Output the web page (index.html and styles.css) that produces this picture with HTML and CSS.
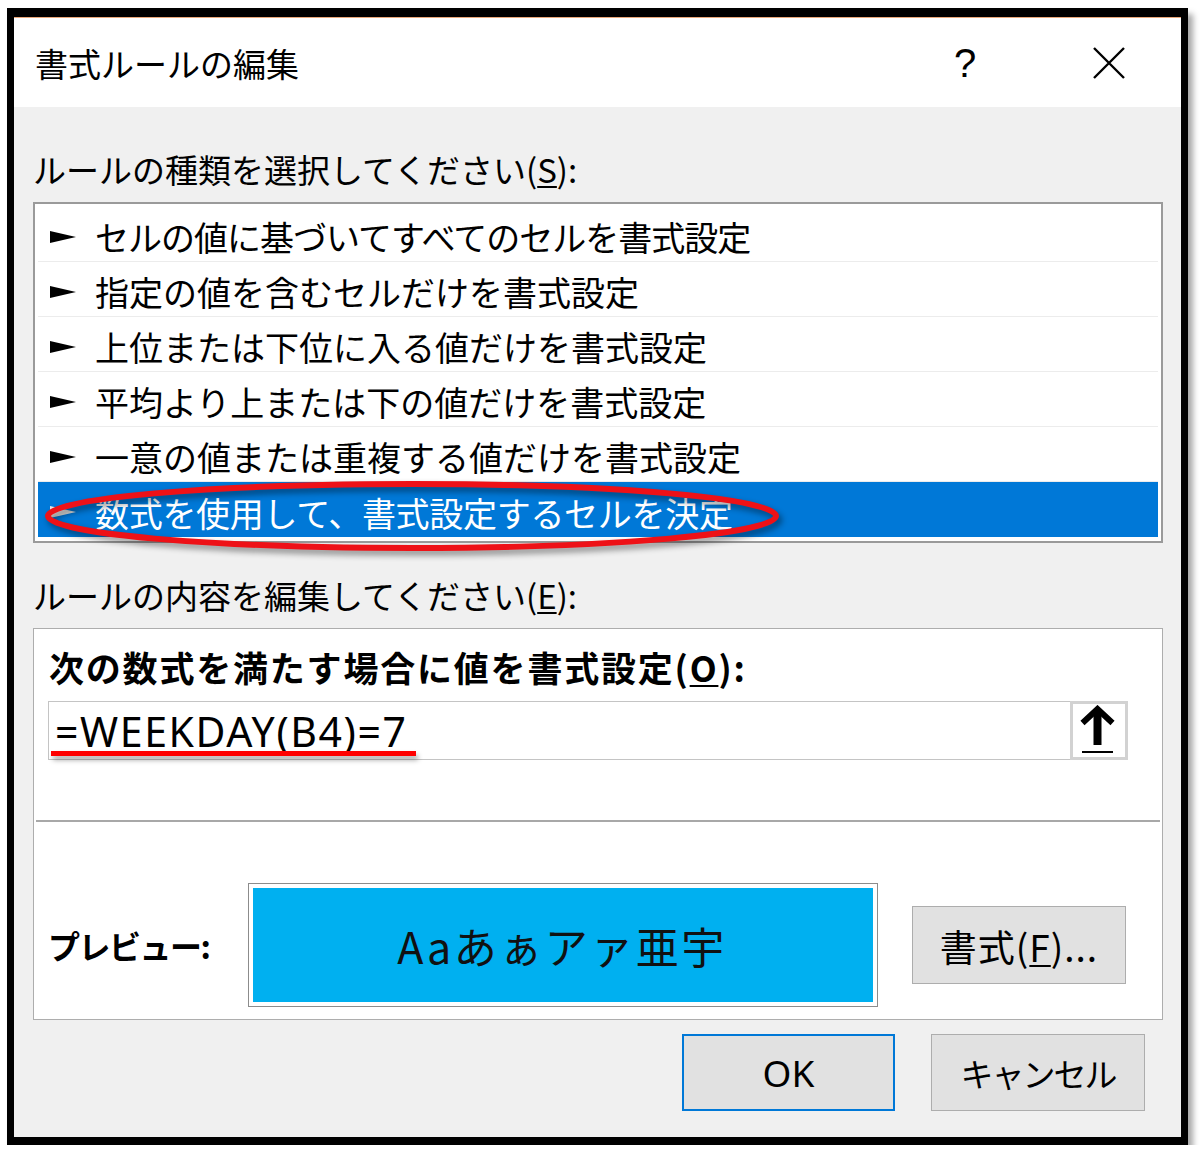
FILE: index.html
```html
<!DOCTYPE html>
<html lang="ja">
<head>
<meta charset="utf-8">
<title>書式ルールの編集</title>
<link rel="stylesheet" href="styles.css">
</head>
<body>
<div class="window">
  <div class="titlebar">
    <span class="title">書式ルールの編集</span>
    <span class="help">?</span>
    <span class="close"><svg width="34" height="32" viewBox="0 0 34 32"><path d="M2 1 L32 31 M32 1 L2 31" stroke="#000" stroke-width="2.4" fill="none"/></svg></span>
  </div>
  <div class="body">
    <div class="label l1">ルールの種類を選択してください(<u>S</u>):</div>
    <div class="list">
      <div class="row tight"><svg class="tri" width="26" height="12" viewBox="0 0 26 12"><path d="M0 0 L26 6 L0 12 Z"/></svg><span>セルの値に基づいてすべてのセルを書式設定</span></div>
      <div class="row"><svg class="tri" width="26" height="12" viewBox="0 0 26 12"><path d="M0 0 L26 6 L0 12 Z"/></svg><span>指定の値を含むセルだけを書式設定</span></div>
      <div class="row"><svg class="tri" width="26" height="12" viewBox="0 0 26 12"><path d="M0 0 L26 6 L0 12 Z"/></svg><span>上位または下位に入る値だけを書式設定</span></div>
      <div class="row"><svg class="tri" width="26" height="12" viewBox="0 0 26 12"><path d="M0 0 L26 6 L0 12 Z"/></svg><span>平均より上または下の値だけを書式設定</span></div>
      <div class="row"><svg class="tri" width="26" height="12" viewBox="0 0 26 12"><path d="M0 0 L26 6 L0 12 Z"/></svg><span>一意の値または重複する値だけを書式設定</span></div>
      <div class="row sel"><svg class="tri" width="26" height="12" viewBox="0 0 26 12"><path d="M0 0 L26 6 L0 12 Z"/></svg><span>数式を使用して、書式設定するセルを決定</span></div>
    </div>
    <div class="label l2">ルールの内容を編集してください(<u>E</u>):</div>
    <div class="panel">
      <div class="blabel">次の数式を満たす場合に値を書式設定(<u>O</u>):</div>
      <div class="input">
        <span class="formula">=WEEKDAY(B4)=7</span>
        <span class="ref"><svg width="52" height="52" viewBox="0 0 52 52"><path d="M9.5 18 L24.5 4 L39.5 18" stroke="#000" stroke-width="6" fill="none" stroke-linejoin="miter" stroke-miterlimit="4"/><rect x="20.5" y="5" width="8" height="35" fill="#000"/><rect x="9" y="46" width="31" height="2" fill="#000"/></svg></span>
      </div>
      <div class="sep"></div>
      <div class="preview-row">
        <div class="plabel">プレビュー:</div>
        <div class="pbox"><div class="pinner">Aaあぁアァ亜宇</div></div>
        <div class="btn fmt">書式(<u>F</u>)...</div>
      </div>
    </div>
    <div class="buttons">
      <div class="btn ok">OK</div>
      <div class="btn cancel">キャンセル</div>
    </div>
  </div>
  <svg class="ellipse" width="780" height="100" viewBox="0 0 780 100"><ellipse cx="378" cy="44" rx="364" ry="32" fill="none" stroke="#ee1117" stroke-width="6"/></svg>
</div>
</body>
</html>
```
FILE: styles.css
```css
* { box-sizing: border-box; }
html, body { margin: 0; padding: 0; background: #fff; }
body {
  font-family: "Noto Sans CJK JP", "Noto Sans", sans-serif;
  color: #000;
}
u { text-decoration-thickness: 2px; text-underline-offset: 3px; }

.window {
  position: relative;
  margin: 8px 0 0 7px;
  width: 1181px;
  height: 1137px;
  border-style: solid;
  border-color: #000;
  border-width: 9px 7px 8px 7px;
  background: #f0f0f0;
  box-shadow: 5px 6px 6px rgba(0,0,0,0.35);
  display: flex;
  flex-direction: column;
}

.titlebar {
  height: 90px;
  background: #fff;
  border-top: 1px solid #e9a77a;
  display: flex;
  align-items: center;
  padding-left: 21px;
  padding-right: 49px;
}
.title { flex: 1; font-size: 33px; line-height: 44px; }
.help {
  width: 46px;
  text-align: center;
  font-family: "Liberation Sans", sans-serif;
  font-size: 40px;
  line-height: 44px;
  margin-right: 98px;
}
.close { width: 46px; display: flex; justify-content: center; }

.body {
  flex: 1;
  display: flex;
  flex-direction: column;
  padding: 0 18px 0 19px;
}

.label { font-size: 33px; line-height: 44px; }
.l1 { padding-top: 40px; margin-bottom: 11px; }
.l2 { margin-top: 30px; margin-bottom: 11px; }

.list {
  height: 341px;
  background: #fff;
  border: 2px solid #9a9a9a;
  padding: 3px 3px 4px 3px;
}
.row {
  height: 55px;
  display: flex;
  align-items: center;
  padding: 5px 0 0 12px;
  font-size: 34px;
  border-bottom: 1px solid #ececec;
}
.row.tight { letter-spacing: -1px; }
.row .tri { margin-right: 19px; fill: #000; flex: none; }
.row.sel { background: #0078d7; color: #fff; border-bottom: none; letter-spacing: -0.3px; }
.row.sel .tri { fill: #e8e8e8; }

.panel {
  height: 392px;
  background: #fff;
  border: 1px solid #adadad;
  display: flex;
  flex-direction: column;
}
.blabel {
  font-weight: 700;
  font-size: 35px;
  line-height: 44px;
  letter-spacing: 1.8px;
  margin: 16px 0 0 15px;
}
.input {
  position: relative;
  margin: 12px 0 0 14px;
  width: 1080px;
  height: 59px;
  border: 1px solid #c4c4c4;
  display: flex;
  align-items: center;
  padding-left: 6px;
}
.formula {
  flex: 1;
  font-family: "Noto Sans", sans-serif;
  font-size: 41px;
  line-height: 57px;
  letter-spacing: 1.6px;
  padding-top: 2px;
}
.input::after {
  content: "";
  position: absolute;
  left: 2px;
  top: 49px;
  width: 365px;
  height: 5px;
  background: #f00;
  box-shadow: 2px 4px 5px rgba(0,0,0,0.35);
}
.ref {
  width: 58px;
  height: 59px;
  margin: -1px -1px -1px 0;
  border: 3px solid #d2d2d2;
  background: #fff;
  display: flex;
  align-items: center;
  justify-content: center;
}

.sep {
  height: 2px;
  background: #a8a8a8;
  margin: 60px 2px 0 2px;
}

.preview-row {
  margin-top: 61px;
  height: 124px;
  display: flex;
  align-items: center;
  padding-left: 14px;
}
.plabel {
  width: 200px;
  font-weight: 700;
  font-size: 32px;
  line-height: 44px;
  letter-spacing: -1.5px;
}
.pbox {
  width: 630px;
  height: 124px;
  border: 1px solid #8c8c8c;
  padding: 4px;
  background: #fff;
}
.pinner {
  height: 100%;
  background: #00b0f0;
  display: flex;
  align-items: center;
  justify-content: center;
  font-size: 43px;
  letter-spacing: 2.5px;
  color: #111;
  padding-right: 2px;
}

.btn {
  background: #e1e1e1;
  border: 1px solid #adadad;
  display: flex;
  align-items: center;
  justify-content: center;
}
.fmt {
  margin-left: 34px;
  width: 214px;
  height: 78px;
  font-size: 37px;
  letter-spacing: 1px;
  padding-top: 2px;
}

.buttons {
  display: flex;
  justify-content: flex-end;
  gap: 36px;
  margin-top: 14px;
  padding-right: 18px;
}
.ok {
  width: 213px;
  height: 77px;
  border: 2px solid #0078d7;
  font-family: "Noto Sans", sans-serif;
  font-size: 37px;
}
.cancel {
  width: 214px;
  height: 77px;
  font-size: 33px;
  letter-spacing: -2px;
}

.ellipse {
  position: absolute;
  left: 20px;
  top: 455px;
  filter: drop-shadow(3px 4px 3px rgba(0,0,0,0.45));
  pointer-events: none;
}
```
